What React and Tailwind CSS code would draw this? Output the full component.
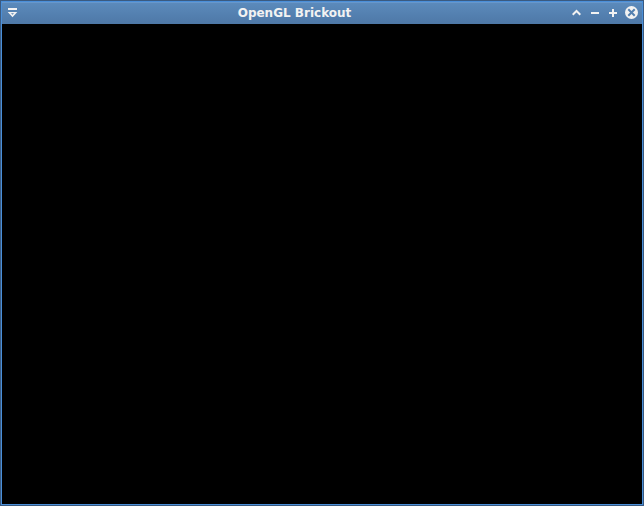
import React from "react";

function TitleButton({ label, children }) {
  return (
    <button type="button" aria-label={label} title={label} className="flex h-4 w-4 shrink-0 items-center justify-center text-[#f2f2f2]">
      <svg viewBox="0 0 16 16" className="h-4 w-4" fill="none" stroke="currentColor" strokeWidth="2" aria-hidden="true">
        {children}
      </svg>
    </button>
  );
}

function TitleBar() {
  return (
    <header className="flex h-[22px] items-center border-t border-[#6797cb] bg-linear-to-b from-[#5b8abb] to-[#4e78a7] pr-[3px] pb-0.5 pl-0.5">
      <TitleButton label="Window menu">
        <path d="M4 4h9" />
        <path d="M3.700 7h9.600L8.500 12.200ZM7 8.300L8.500 9.800L10 8.300Z" fill="currentColor" fillRule="evenodd" stroke="none" />
      </TitleButton>
      <h1 className="grow text-center font-['DejaVu_Sans',sans-serif] text-xs leading-4 font-bold text-[#f2f2f2]">OpenGL Brickout</h1>
      <div className="flex gap-0.5">
        <TitleButton label="Roll up window">
          <path d="M3.700 9.700L7.500 6L11.300 9.700" />
        </TitleButton>
        <TitleButton label="Minimize">
          <path d="M4 8h8" />
        </TitleButton>
        <TitleButton label="Maximize">
          <path d="M4 8h8M8 4v8" />
        </TitleButton>
        <TitleButton label="Close">
          <circle cx="8.5" cy="7.5" r="6.5" fill="currentColor" stroke="none" />
          <path d="M5.300 4.300l6.400 6.400M11.700 4.300l-6.400 6.400" stroke="#5380b0" />
        </TitleButton>
      </div>
    </header>
  );
}

export default function App() {
  return (
    <div className="flex min-h-screen flex-col border border-[#3a5a80] bg-black">
      <div className="flex grow flex-col border border-[#4a8fd9]">
        <TitleBar />
        <main aria-label="Game display" className="grow bg-black" />
      </div>
    </div>
  );
}
